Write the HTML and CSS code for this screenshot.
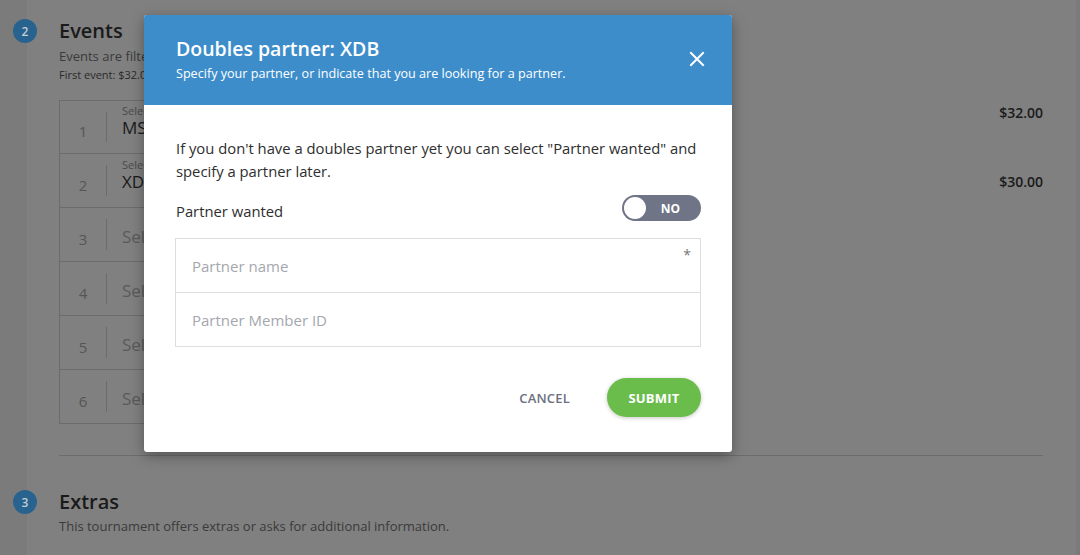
FILE: index.html
```html
<!DOCTYPE html>
<html lang="en">
<head>
<meta charset="utf-8">
<title>Doubles partner</title>
<link rel="stylesheet" href="styles.css">
</head>
<body>
<div class="page">
  <aside class="rail"></aside>
  <main class="main">
    <section class="step">
      <span class="step-badge">2</span>
      <h2 class="step-title">Events</h2>
      <p class="step-desc">Events are filtered based on your profile.</p>
      <p class="step-note">First event: $32.00</p>
      <div class="events">
        <div class="slot">
          <span class="slot-num">1</span>
          <div class="slot-body">
            <span class="slot-label">Select event</span>
            <span class="slot-value">MS Men's Singles</span>
          </div>
        </div>
        <div class="price price-top">$32.00</div>
        <div class="slot">
          <span class="slot-num">2</span>
          <div class="slot-body">
            <span class="slot-label">Select event</span>
            <span class="slot-value">XDB Mixed Doubles</span>
          </div>
        </div>
        <div class="price">$30.00</div>
        <div class="slot">
          <span class="slot-num">3</span>
          <div class="slot-body"><span class="slot-placeholder">Select event</span></div>
        </div>
        <div class="price"></div>
        <div class="slot">
          <span class="slot-num">4</span>
          <div class="slot-body"><span class="slot-placeholder">Select event</span></div>
        </div>
        <div class="price"></div>
        <div class="slot">
          <span class="slot-num">5</span>
          <div class="slot-body"><span class="slot-placeholder">Select event</span></div>
        </div>
        <div class="price"></div>
        <div class="slot">
          <span class="slot-num">6</span>
          <div class="slot-body"><span class="slot-placeholder">Select event</span></div>
        </div>
        <div class="price"></div>
      </div>
    </section>
    <hr class="divider">
    <section class="step step-extras">
      <span class="step-badge">3</span>
      <h2 class="step-title">Extras</h2>
      <p class="step-desc">This tournament offers extras or asks for additional information.</p>
    </section>
  </main>
  <div class="scrollbar"></div>
</div>

<div class="modal" role="dialog" aria-labelledby="modal-title">
  <header class="modal-header">
    <div class="modal-heading">
      <h1 class="modal-title" id="modal-title">Doubles partner: XDB</h1>
      <p class="modal-subtitle">Specify your partner, or indicate that you are looking for a partner.</p>
    </div>
    <button class="modal-close" aria-label="Close">
      <svg width="16" height="16" viewBox="0 0 16 16"><path d="M2 2 L14 14 M14 2 L2 14" stroke="#fff" stroke-width="2" stroke-linecap="square" fill="none"/></svg>
    </button>
  </header>
  <div class="modal-body">
    <p class="modal-text">If you don't have a doubles partner yet you can select "Partner wanted" and specify a partner later.</p>
    <div class="toggle-row">
      <span class="toggle-label">Partner wanted</span>
      <span class="toggle"><span class="toggle-knob"></span><span class="toggle-text">NO</span></span>
    </div>
    <div class="fields">
      <div class="field">
        <span class="field-placeholder">Partner name</span>
        <span class="field-required">*</span>
      </div>
      <div class="field">
        <span class="field-placeholder">Partner Member ID</span>
      </div>
    </div>
    <div class="actions">
      <button class="btn btn-cancel">CANCEL</button>
      <button class="btn btn-submit">SUBMIT</button>
    </div>
  </div>
</div>
</body>
</html>
```

FILE: styles.css
```css
* { box-sizing: border-box; }

html, body {
  margin: 0;
  padding: 0;
  height: 555px;
  overflow: hidden;
}

body {
  background: #808080;
  font-family: "Open Sans", "Noto Sans", sans-serif;
  color: #1c1c1c;
}

.page {
  display: flex;
  height: 555px;
}

.rail {
  width: 27px;
  flex: none;
  background: #7b7b7b;
}

.scrollbar {
  width: 4px;
  flex: none;
  background: #7b7b7b;
}

.main {
  flex: 1;
  padding: 18px 33px 0 32px;
  min-width: 0;
}

.step {
  position: relative;
}

.step-badge {
  position: absolute;
  left: -46px;
  top: 1px;
  width: 24px;
  height: 24px;
  border-radius: 50%;
  background: #28628f;
  color: #c4ccd4;
  font-size: 12px;
  font-weight: 600;
  display: flex;
  align-items: center;
  justify-content: center;
}

.step-title {
  margin: 0;
  font-size: 20px;
  font-weight: 600;
  line-height: 26px;
  color: #1a1a1a;
}

.step-desc {
  margin: 3px 0 0;
  font-size: 13px;
  line-height: 18px;
  color: #3a3a3a;
}

.step-note {
  margin: 2px 0 0;
  font-size: 11px;
  line-height: 16px;
  color: #2a2a2a;
}

.events {
  margin-top: 17px;
  display: grid;
  grid-template-columns: 600px 1fr;
}

.slot {
  height: 54px;
  display: flex;
  align-items: stretch;
  border: 1px solid #6c6c6c;
  border-top: none;
}

.slot:first-child {
  border-top: 1px solid #6c6c6c;
}

.slot-num {
  width: 46px;
  flex: none;
  display: flex;
  align-items: center;
  justify-content: center;
  padding-top: 8px;
  font-size: 15px;
  color: #555;
}

.slot-body {
  flex: 1;
  margin: 11px 0;
  border-left: 1px solid #6c6c6c;
  padding-left: 15px;
  display: flex;
  flex-direction: column;
  justify-content: center;
}

.slot-label {
  font-size: 11px;
  line-height: 12px;
  margin-top: -10px;
  color: #4a4a4a;
}

.slot-value {
  font-size: 17px;
  line-height: 22px;
  color: #1a1a1a;
}

.slot-placeholder {
  font-size: 17px;
  line-height: 22px;
  padding-top: 4px;
  color: #5a5a5a;
}

.price {
  display: flex;
  justify-content: flex-end;
  align-items: center;
  font-size: 14px;
  font-weight: 600;
  color: #1a1a1a;
}

.price-top {
  align-items: flex-start;
  padding-top: 3px;
}

.divider {
  margin: 31px 0 0;
  border: none;
  border-top: 1px solid #6c6c6c;
}

.step-extras {
  margin-top: 33px;
}

.step-extras .step-desc {
  margin-top: 2px;
}

/* Modal */
.modal {
  position: absolute;
  left: 144px;
  top: 15px;
  width: 588px;
  background: #fff;
  border-radius: 3px;
  overflow: hidden;
  box-shadow: 0 4px 14px rgba(0, 0, 0, 0.35);
}

.modal-header {
  background: #3d8dcb;
  height: 90px;
  padding: 21px 31px 0 32px;
  display: flex;
  justify-content: space-between;
  align-items: flex-start;
}

.modal-title {
  margin: 0;
  font-size: 19.5px;
  font-weight: 600;
  line-height: 26px;
  color: #fff;
}

.modal-subtitle {
  margin: 3px 0 0;
  font-size: 12.6px;
  line-height: 18px;
  color: #fff;
}

.modal-close {
  background: none;
  border: none;
  padding: 0;
  margin: 15px -4px 0 0;
  width: 16px;
  height: 16px;
  display: flex;
}

.modal-body {
  padding: 32px 31px 35px 32px;
}

.modal-text {
  margin: 0;
  font-size: 14.8px;
  line-height: 23px;
  color: #2e2e2e;
}

.toggle-row {
  margin-top: 12px;
  display: flex;
  justify-content: space-between;
  align-items: center;
}

.toggle-label {
  font-size: 14.8px;
  line-height: 20px;
  color: #2e2e2e;
  padding-top: 5px;
}

.toggle {
  position: relative;
  width: 79px;
  height: 26px;
  border-radius: 13px;
  background: #6f7486;
  display: flex;
  align-items: center;
  justify-content: flex-end;
  padding-right: 21px;
}

.toggle-knob {
  position: absolute;
  left: 2px;
  top: 2px;
  width: 22px;
  height: 22px;
  border-radius: 50%;
  background: #fff;
}

.toggle-text {
  font-size: 12px;
  font-weight: 700;
  color: #fff;
}

.fields {
  margin: 17px 0 0 -1px;
  border: 1px solid #dcdde1;
}

.field {
  position: relative;
  height: 53px;
  display: flex;
  align-items: center;
  padding-left: 16px;
}

.field + .field {
  height: 54px;
  border-top: 1px solid #dcdde1;
}

.field-placeholder {
  font-size: 15px;
  color: #a4a7ae;
}

.field-required {
  position: absolute;
  right: 9px;
  top: 6px;
  font-size: 14px;
  color: #777;
}

.actions {
  margin-top: 31px;
  display: flex;
  justify-content: flex-end;
  align-items: center;
  gap: 21px;
}

.btn {
  font-family: inherit;
  border: none;
  background: none;
  font-size: 13px;
  font-weight: 700;
  letter-spacing: 0.2px;
  cursor: pointer;
}

.btn-cancel {
  color: #6b7080;
  padding: 10px 16px;
  font-weight: 600;
}

.btn-submit {
  width: 94px;
  height: 39px;
  border-radius: 20px;
  background: #6abd4b;
  color: #fff;
  box-shadow: 0 1px 4px rgba(0, 0, 0, 0.22);
}
```
